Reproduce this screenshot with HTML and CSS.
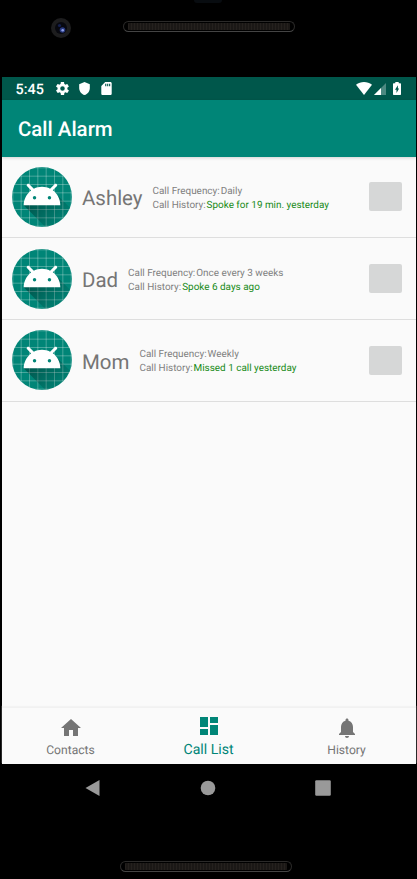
FILE: index.html
```html
<!DOCTYPE html>
<html lang="en">
<head>
<meta charset="utf-8">
<title>Call Alarm</title>
<link rel="stylesheet" href="styles.css">
</head>
<body>
<svg class="defs" width="0" height="0">
  <defs>
    <linearGradient id="shade" gradientUnits="userSpaceOnUse" x1="48" y1="58" x2="78" y2="90"><stop offset="0" stop-opacity=".32"/><stop offset="1" stop-opacity="0"/></linearGradient>
    <clipPath id="round"><circle cx="54" cy="54" r="36"/></clipPath>
    <symbol id="robot" viewBox="18 18 72 72">
      <g clip-path="url(#round)">
        <rect x="18" y="18" width="72" height="72" fill="#008577"/>
        <path d="M19 18v72M29 18v72M39 18v72M49 18v72M59 18v72M69 18v72M79 18v72M89 18v72M18 19h72M18 29h72M18 39h72M18 49h72M18 59h72M18 69h72M18 79h72M18 89h72" stroke="#fff" stroke-opacity=".38" stroke-width=".9"/>
        <path fill="url(#shade)" d="M32,64C32,64 38.39,52.99 44.13,50.95C51.37,48.37 70.14,49.57 70.14,49.57L108.26,87.69L108,109.01L75.97,107.97Z"/>
        <path fill="#fff" d="M66.94,46.02C72.44,50.07 76,56.61 76,64L32,64C32,56.61 35.56,50.11 40.98,46.06L36.18,41.19C35.45,40.45 35.45,39.3 36.18,38.56C36.91,37.81 38.05,37.81 38.78,38.56L44.25,44.05C47.18,42.57 50.48,41.71 54,41.71C57.48,41.71 60.78,42.57 63.68,44.05L69.11,38.56C69.84,37.81 70.98,37.81 71.71,38.56C72.44,39.3 72.44,40.45 71.71,41.19Z"/>
        <circle cx="45.06" cy="54.88" r="2.06" fill="#008577"/><circle cx="62.94" cy="54.88" r="2.06" fill="#008577"/>
      </g>
    </symbol>
  </defs>
</svg>
<div class="phone">
  <div class="bezel-top">
    <div class="notch"></div>
    <svg class="camera" viewBox="0 0 20 20"><circle cx="10" cy="10" r="10" fill="#1d1d1e"/><circle cx="10" cy="10" r="6" fill="#07080f"/><circle cx="8.5" cy="7.5" r="1.6" fill="#15204f"/><circle cx="11.5" cy="12" r="2.8" fill="#28397f"/><circle cx="11.7" cy="12.2" r="1.3" fill="#8fa0e8"/></svg>
    <div class="speaker"></div>
  </div>
  <main class="screen">
    <div class="status">
      <span class="time">5:45</span>
      <svg class="gear" viewBox="2 2 20 20"><path d="M19.4 13c0-.3.1-.6.1-1s0-.7-.1-1l2.1-1.6c.2-.2.3-.4.1-.7l-2-3.4c-.1-.2-.4-.3-.6-.2l-2.5 1c-.5-.4-1.1-.7-1.7-1l-.4-2.6c0-.3-.2-.5-.5-.5h-4c-.3 0-.5.2-.5.4l-.4 2.7c-.6.2-1.1.6-1.7 1l-2.4-1c-.3-.1-.5 0-.7.2l-2 3.4c-.1.3 0 .5.2.7L4.5 11c0 .3-.1.6-.1 1s0 .7.1 1l-2.1 1.6c-.2.2-.3.4-.1.7l2 3.4c.1.2.4.3.6.2l2.5-1c.5.4 1.1.7 1.7 1l.4 2.6c0 .3.2.5.5.5h4c.3 0 .5-.2.5-.4l.4-2.7c.6-.2 1.1-.6 1.7-1l2.4 1c.3.1.5 0 .7-.2l2-3.4c.1-.3 0-.5-.2-.7zM12 15.5a3.5 3.5 0 1 1 0-7 3.5 3.5 0 0 1 0 7z"/></svg>
      <svg class="shield" viewBox="3 1 18 22"><path d="M12 1 3 5v6c0 5.5 3.8 10.700 9 12 5.200-1.300 9-6.500 9-12V5z"/></svg>
      <svg class="card" viewBox="4 2 16 20"><path fill-rule="evenodd" d="M18 2h-8L4 8v12c0 1.100.9 2 2 2h12c1.100 0 2-.9 2-2V4c0-1.100-.9-2-2-2zM10 4.500v4h1.700v-4zm3 0v4h1.700v-4zm3 0v4h1.700v-4z"/></svg>
      <svg class="wifi" viewBox="0 0 16 13"><path d="M0 2.800C4.700-.9 11.300-.9 16 2.800L8 13z"/></svg>
      <svg class="signal" viewBox="0 0 12 12"><path d="M12 0v12H0z" opacity=".3"/><path d="M7 5v7H0z"/></svg>
      <svg class="battery" viewBox="0 0 8 13"><path fill-rule="evenodd" d="M2.300 0h3.400v1.300H7.300q.7 0 .7.700v10.300q0 .7-.7.700H.7Q0 13 0 12.300V2q0-.7.7-.7h1.600zM4.900 3.300 2 7.800h1.500v3.200L6.100 6.500H4.900z"/></svg>
    </div>
    <header class="appbar">Call Alarm</header>
    <div class="list">
      <section class="row"><svg class="avatar"><use href="#robot"/></svg><h2>Ashley</h2><div class="info"><p>Call Frequency:<span>Daily</span></p><p>Call History:<span class="green">Spoke for 19 min. yesterday</span></p></div><button class="box" aria-label="Call Ashley"></button></section>
      <section class="row"><svg class="avatar"><use href="#robot"/></svg><h2>Dad</h2><div class="info"><p>Call Frequency:<span>Once every 3 weeks</span></p><p>Call History:<span class="green">Spoke 6 days ago</span></p></div><button class="box" aria-label="Call Dad"></button></section>
      <section class="row"><svg class="avatar"><use href="#robot"/></svg><h2>Mom</h2><div class="info"><p>Call Frequency:<span>Weekly</span></p><p>Call History:<span class="green">Missed 1 call yesterday</span></p></div><button class="box" aria-label="Call Mom"></button></section>
    </div>
    <nav class="tabs">
      <a class="tab"><svg viewBox="0 0 24 24"><path d="M10 20v-6h4v6h5v-8h3L12 3 2 12h3v8z"/></svg><span>Contacts</span></a>
      <a class="tab active"><svg viewBox="0 0 24 24"><path d="M3 13h8V3H3v10zm0 8h8v-6H3v6zm10 0h8V11h-8v10zm0-18v6h8V3h-8z"/></svg><span>Call List</span></a>
      <a class="tab"><svg viewBox="0 0 24 24"><path d="M12 22c1.100 0 2-.9 2-2h-4c0 1.100.9 2 2 2zm6-6v-5c0-3.070-1.640-5.640-4.500-6.320V4c0-.83-.67-1.500-1.500-1.500s-1.500.67-1.500 1.500v.68C7.630 5.360 6 7.920 6 11v5l-2 2v1h16v-1z"/></svg><span>History</span></a>
    </nav>
  </main>
  <div class="syskeys">
    <svg viewBox="0 0 16 18"><path d="M14.500 1v16L.5 9z"/></svg>
    <svg viewBox="0 0 16 18"><circle cx="8" cy="9" r="7.300"/></svg>
    <svg viewBox="0 0 16 18"><rect x=".2" y="1.200" width="15.600" height="15.600" rx="1.200"/></svg>
  </div>
  <div class="speaker low"></div>
</div>
</body>
</html>
```
FILE: styles.css
```css
* { box-sizing: border-box; margin: 0; padding: 0; }
body { background: #000; font-family: Roboto, sans-serif; text-rendering: geometricPrecision; }
.defs { position: absolute; }
.phone { width: 417px; height: 879px; overflow: hidden; background: #000; display: flex; flex-direction: column; }
.bezel-top { position: relative; height: 77px; flex: none; display: flex; padding: 18px 0 0 51px; }
.notch { position: absolute; left: 194px; top: 0; width: 28px; height: 3px; border-radius: 0 0 4px 4px; background: #080c10; }
.camera { width: 20px; height: 20px; }
.speaker { width: 172px; height: 11px; margin: 3px 0 0 52px; border-radius: 6px; border: 1px solid #2b2a29; border-bottom-color: #444; background: repeating-linear-gradient(90deg, #25211e 0 1px, #1b1816 1px 3px) content-box #0b0b0b; padding: 1px 4px; }
.screen { width: 414px; height: 687px; margin-left: 2px; flex: none; background: #fafafa; display: flex; flex-direction: column; }
.status { height: 23px; flex: none; background: #00574b; display: flex; align-items: center; padding: 0 15px 0 13.500px; color: #fff; }
.status svg { fill: #fff; flex: none; }
.time { font-size: 14.400px; font-weight: 500; width: 40px; line-height: 23px; padding-top: 1px; }
.gear { width: 13px; height: 13px; }
.shield { width: 11px; height: 13px; margin-left: 10px; }
.card { width: 11px; height: 13px; margin-left: 11.500px; }
.wifi { width: 16px; height: 13px; margin-left: auto; }
.signal { width: 12px; height: 12px; margin-left: 2px; }
.battery { width: 8px; height: 13px; margin-left: 7px; }
.appbar { height: 56.600px; flex: none; background: #008577; color: #fff; font-size: 20.450px; font-weight: 500; line-height: 59px; padding-left: 16px; box-shadow: 0 1px 3px rgba(0,0,0,.16); }
.list { flex: 1; }
.row { height: 81.700px; display: flex; align-items: center; padding: 0 14px 0 10px; border-bottom: 1.500px solid #dedede; }
.avatar { width: 60px; height: 60px; flex: none; }
.row h2 { font-size: 20.450px; font-weight: 400; color: #757575; margin-left: 10px; padding-top: 2.600px; }
.info { margin-left: 10px; padding-top: 3.800px; font-size: 9.930px; line-height: 14px; color: #808080; }
.info span { margin-left: 1px; }
.info .green { color: #178a17; }
.box { width: 33px; height: 29px; margin-left: auto; border: 0; border-radius: 2px; background: #d6d7d7; }
.tabs { height: 57px; flex: none; display: flex; border-top: 1px solid #f1f1f1; box-shadow: 0 -1px 1px #f3f3f3; }
.tab { width: 138px; flex: none; display: flex; flex-direction: column; align-items: center; color: #757575; fill: #757575; font-size: 12.100px; padding: 8px 1px 0 0; }
.tab svg { width: 24px; height: 24px; }
.tab span { line-height: 16px; margin-top: 2px; }
.tab.active { color: #008577; fill: #008577; font-size: 14.100px; padding-top: 6px; }
.tab.active span { margin-top: 4px; }
.syskeys { height: 48px; flex: none; display: flex; padding-left: 85px; gap: 99px; align-items: center; }
.syskeys svg { width: 16px; height: 18px; fill: #999; }
.speaker.low { margin: 49px 0 0 120px; flex: none; }
```
